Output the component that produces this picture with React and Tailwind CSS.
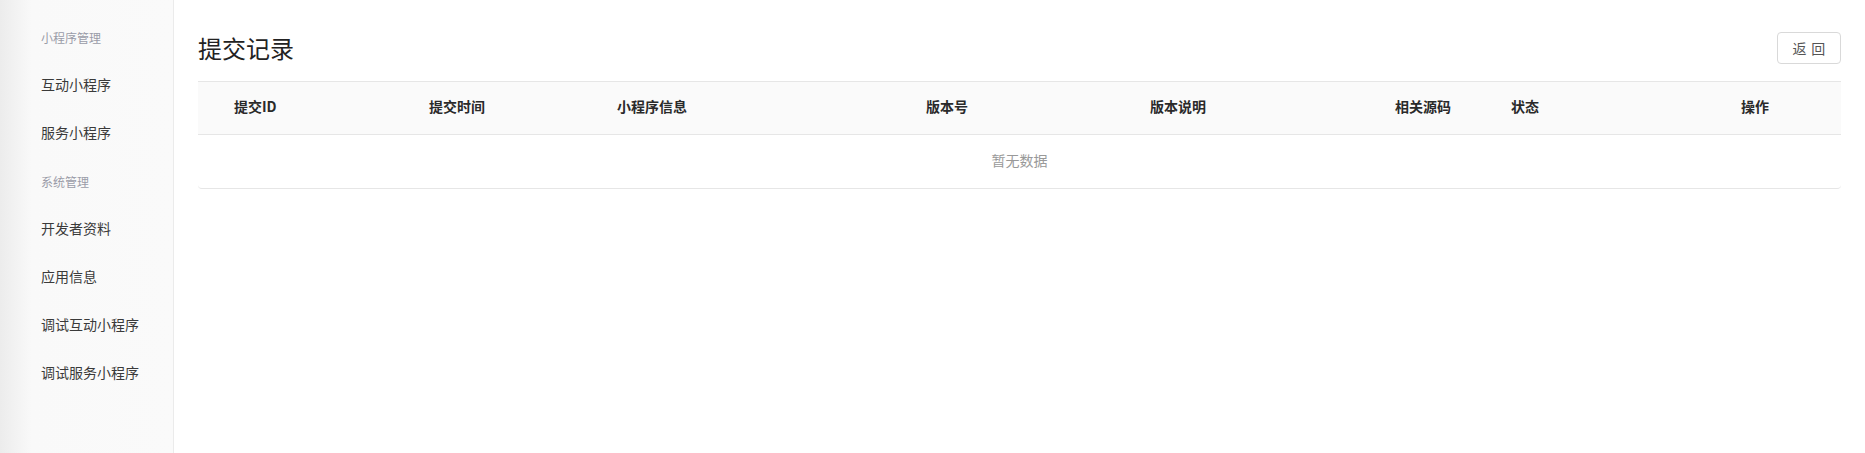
const FONT = { fontFamily: '"Noto Sans CJK SC", "Noto Sans", sans-serif' };

const MENU = [
  { type: 'group', label: '小程序管理' },
  { type: 'item', label: '互动小程序' },
  { type: 'item', label: '服务小程序' },
  { type: 'group', label: '系统管理' },
  { type: 'item', label: '开发者资料' },
  { type: 'item', label: '应用信息' },
  { type: 'item', label: '调试互动小程序' },
  { type: 'item', label: '调试服务小程序' },
];

const COLUMNS = [
  { label: '提交ID', className: 'pl-[36px]' },
  { label: '提交时间' },
  { label: '小程序信息' },
  { label: '版本号' },
  { label: '版本说明' },
  { label: '相关源码' },
  { label: '状态' },
  { label: '操作' },
];

function Sidebar() {
  return (
    <aside className="w-[174px] shrink-0 border-r border-[#ebebeb] bg-[linear-gradient(to_right,#ececec,#f9f9f9_32px,#fafafa)] pt-[12px]">
      {MENU.map((m) =>
        m.type === 'group' ? (
          <div key={m.label} className="h-12 flex items-center pl-[41px] pt-[3px] text-[12px] text-[#9a9ca8]">
            {m.label}
          </div>
        ) : (
          <div key={m.label} className="h-12 flex items-center pl-[41px] text-[14px] text-[#3a3a3a] cursor-pointer hover:text-black">
            {m.label}
          </div>
        )
      )}
    </aside>
  );
}

export default function App() {
  return (
    <div className="flex min-h-[453px] bg-white" style={FONT}>
      <Sidebar />

      <main className="flex-1 px-6">
        <div className="flex items-center justify-between pt-[32px]">
          <h1 className="text-[24px] leading-[32px] text-[#222] -mt-[1px]">提交记录</h1>
          <button className="h-[32px] w-[64px] rounded border border-[#d9d9d9] bg-white text-[14px] text-[#555]">
            <span className="tracking-[0.34em] mr-[-0.34em]">返回</span>
          </button>
        </div>

        <div className="mt-[17px] rounded-b border-t border-b border-[#e6e6e6]">
          <div className="grid grid-cols-[231px_188px_309px_224px_245px_116px_230px_1fr] h-[53px] items-center bg-[#fafafa] border-b border-[#e6e6e6] pb-[3px]">
            {COLUMNS.map((c) => (
              <div key={c.label} className={`text-[14px] font-semibold text-[#2a2a2a] ${c.className || ''}`}>
                {c.label}
              </div>
            ))}
          </div>
          <div className="h-[53px] flex items-center justify-center text-[14px] text-[#999] pb-[2px]">
            暂无数据
          </div>
        </div>
      </main>
    </div>
  );
}
